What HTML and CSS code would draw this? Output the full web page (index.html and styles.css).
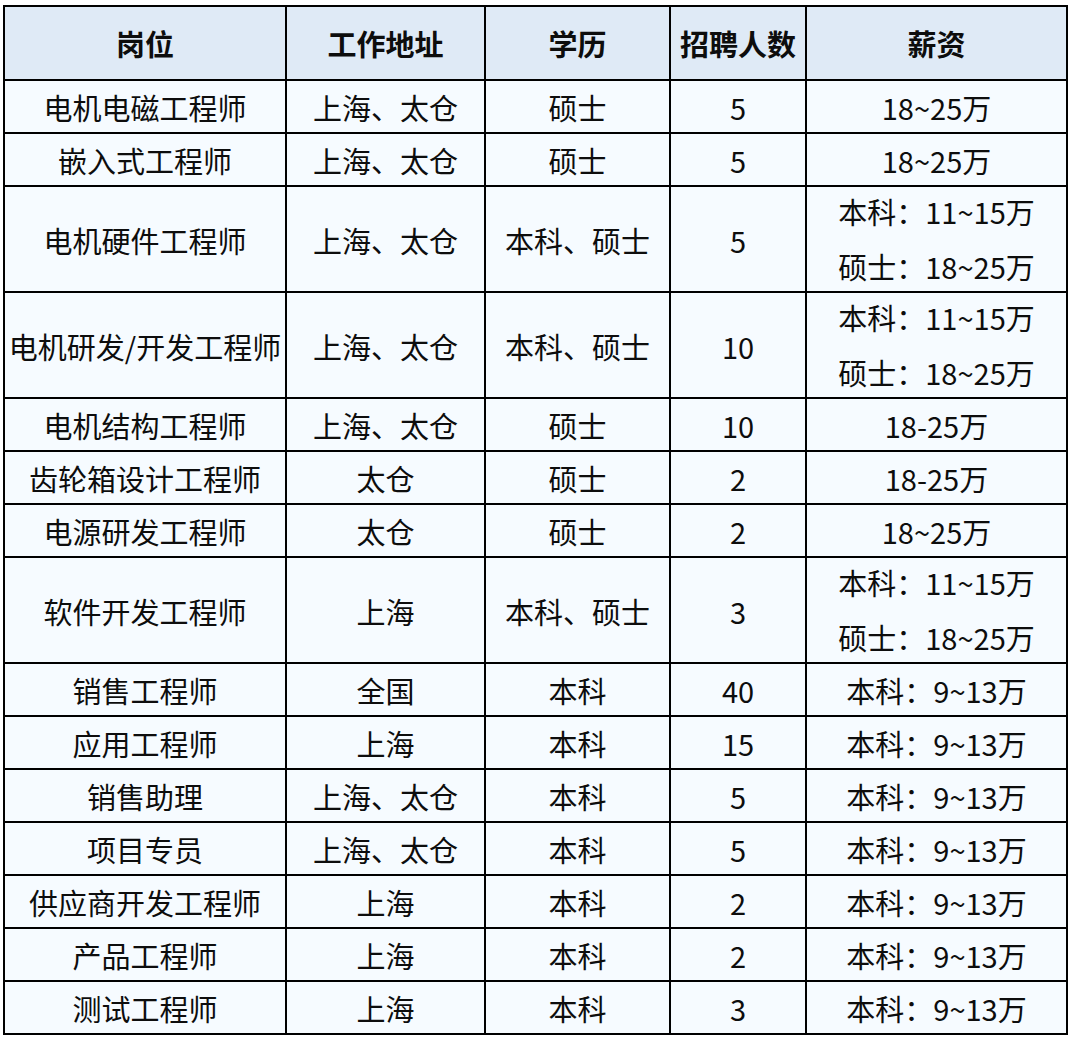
FILE: index.html
```html
<!DOCTYPE html>
<html lang="zh-CN">
<head>
<meta charset="utf-8">
<title>招聘岗位</title>
<link rel="stylesheet" href="styles.css">
</head>
<body>
<table class="jobs">
  <colgroup>
    <col class="c1"><col class="c2"><col class="c3"><col class="c4"><col class="c5">
  </colgroup>
  <thead>
    <tr><th>岗位</th><th>工作地址</th><th>学历</th><th>招聘人数</th><th>薪资</th></tr>
  </thead>
  <tbody>
    <tr><td>电机电磁工程师</td><td>上海、太仓</td><td>硕士</td><td>5</td><td>18~25万</td></tr>
    <tr><td>嵌入式工程师</td><td>上海、太仓</td><td>硕士</td><td>5</td><td>18~25万</td></tr>
    <tr class="tall"><td>电机硬件工程师</td><td>上海、太仓</td><td>本科、硕士</td><td>5</td><td class="two"><div class="lines">本科：11~15万<br>硕士：18~25万</div></td></tr>
    <tr class="tall"><td>电机研发/开发工程师</td><td>上海、太仓</td><td>本科、硕士</td><td>10</td><td class="two"><div class="lines">本科：11~15万<br>硕士：18~25万</div></td></tr>
    <tr><td>电机结构工程师</td><td>上海、太仓</td><td>硕士</td><td>10</td><td>18-25万</td></tr>
    <tr><td>齿轮箱设计工程师</td><td>太仓</td><td>硕士</td><td>2</td><td>18-25万</td></tr>
    <tr><td>电源研发工程师</td><td>太仓</td><td>硕士</td><td>2</td><td>18~25万</td></tr>
    <tr class="tall"><td>软件开发工程师</td><td>上海</td><td>本科、硕士</td><td>3</td><td class="two"><div class="lines">本科：11~15万<br>硕士：18~25万</div></td></tr>
    <tr><td>销售工程师</td><td>全国</td><td>本科</td><td>40</td><td>本科：9~13万</td></tr>
    <tr><td>应用工程师</td><td>上海</td><td>本科</td><td>15</td><td>本科：9~13万</td></tr>
    <tr><td>销售助理</td><td>上海、太仓</td><td>本科</td><td>5</td><td>本科：9~13万</td></tr>
    <tr><td>项目专员</td><td>上海、太仓</td><td>本科</td><td>5</td><td>本科：9~13万</td></tr>
    <tr><td>供应商开发工程师</td><td>上海</td><td>本科</td><td>2</td><td>本科：9~13万</td></tr>
    <tr><td>产品工程师</td><td>上海</td><td>本科</td><td>2</td><td>本科：9~13万</td></tr>
    <tr><td>测试工程师</td><td>上海</td><td>本科</td><td>3</td><td>本科：9~13万</td></tr>
  </tbody>
</table>
</body>
</html>
```

FILE: styles.css
```css
html, body {
  margin: 0;
  padding: 0;
  background: #ffffff;
}

body {
  padding: 5px 0 0 3px;
  font-family: "Noto Sans CJK SC", "Noto Sans", sans-serif;
  color: #0d0d0d;
}

.jobs {
  table-layout: fixed;
  width: 1065px;
  border-collapse: separate;
  border-spacing: 2px;
  background: #000000;
}

.c1 { width: 280px; }
.c2 { width: 197px; }
.c3 { width: 183px; }
.c4 { width: 134px; }
.c5 { width: 259px; }

.jobs th,
.jobs td {
  padding: 0;
  text-align: center;
  vertical-align: middle;
  font-size: 29px;
  white-space: nowrap;
  overflow: hidden;
}

.jobs th {
  height: 72px;
  background: #dfeaf6;
  font-weight: 700;
  line-height: 72px;
}

.jobs td {
  height: 49px;
  padding-top: 2px;
  background: #f6fbff;
  font-weight: 400;
  line-height: 49px;
}

.jobs tr.tall td {
  height: 102px;
}

.jobs td.two {
  padding-top: 0;
  height: 104px;
}

.lines {
  margin: -3px 0;
  line-height: 55px;
}
```
